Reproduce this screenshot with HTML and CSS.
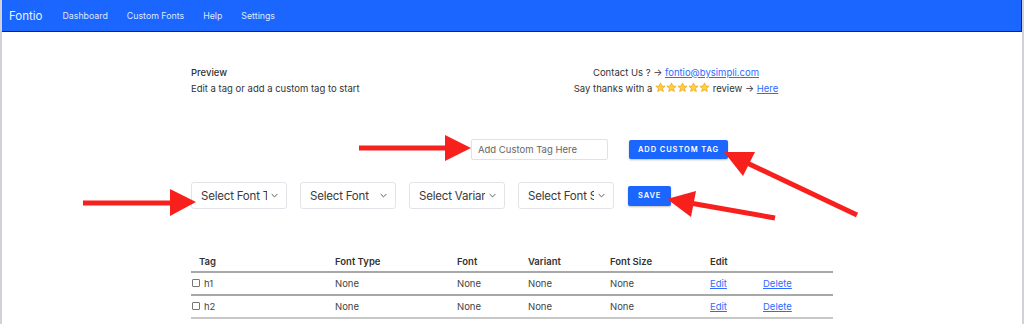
FILE: index.html
```html
<!DOCTYPE html>
<html>
<head>
  <title>Fontio</title>
  <link rel="stylesheet" href="styles.css">
</head>
<body>
  <div class="frame">
    <nav class="navbar">
      <span class="brand">Fontio</span>
      <a class="nav-link" href="#">Dashboard</a>
      <a class="nav-link" href="#">Custom Fonts</a>
      <a class="nav-link" href="#">Help</a>
      <a class="nav-link" href="#">Settings</a>
    </nav>

    <div class="content">
      <div class="top">
        <div class="preview">
          <div class="preview-title">Preview</div>
          <div>Edit a tag or add a custom tag to start</div>
        </div>
        <div class="contact">
          <div>Contact Us ? &#8594; <a href="#">fontio@bysimpli.com</a></div>
          <div>Say thanks with a
            <span class="stars">
              <svg viewBox="0 0 24 24"><path d="M12 2l2.9 6.6 7.1.6-5.4 4.7 1.6 7-6.2-3.7-6.2 3.7 1.6-7L2 9.2l7.1-.6z"/></svg><svg viewBox="0 0 24 24"><path d="M12 2l2.9 6.6 7.1.6-5.4 4.7 1.6 7-6.2-3.7-6.2 3.7 1.6-7L2 9.2l7.1-.6z"/></svg><svg viewBox="0 0 24 24"><path d="M12 2l2.9 6.6 7.1.6-5.4 4.7 1.6 7-6.2-3.7-6.2 3.7 1.6-7L2 9.2l7.1-.6z"/></svg><svg viewBox="0 0 24 24"><path d="M12 2l2.9 6.6 7.1.6-5.4 4.7 1.6 7-6.2-3.7-6.2 3.7 1.6-7L2 9.2l7.1-.6z"/></svg><svg viewBox="0 0 24 24"><path d="M12 2l2.9 6.6 7.1.6-5.4 4.7 1.6 7-6.2-3.7-6.2 3.7 1.6-7L2 9.2l7.1-.6z"/></svg>
            </span>
            review &#8594; <a href="#">Here</a></div>
        </div>
      </div>

      <div class="custom-row">
        <input class="tag-input" type="text" placeholder="Add Custom Tag Here">
        <button class="btn">ADD CUSTOM TAG</button>
      </div>

      <div class="select-row">
        <div class="select"><span class="select-text">Select Font Type</span><svg class="chev" viewBox="0 0 10 6"><path d="M1 1l4 4 4-4"/></svg></div>
        <div class="select"><span class="select-text">Select Font</span><svg class="chev" viewBox="0 0 10 6"><path d="M1 1l4 4 4-4"/></svg></div>
        <div class="select"><span class="select-text">Select Variant</span><svg class="chev" viewBox="0 0 10 6"><path d="M1 1l4 4 4-4"/></svg></div>
        <div class="select"><span class="select-text">Select Font Size</span><svg class="chev" viewBox="0 0 10 6"><path d="M1 1l4 4 4-4"/></svg></div>
        <button class="btn btn-save">SAVE</button>
      </div>

      <table class="tags">
        <colgroup>
          <col style="width:136px"><col style="width:122px"><col style="width:71px"><col style="width:82px"><col style="width:100px"><col style="width:53px"><col>
        </colgroup>
        <thead>
          <tr><th>Tag</th><th>Font Type</th><th>Font</th><th>Variant</th><th>Font Size</th><th>Edit</th><th></th></tr>
        </thead>
        <tbody>
          <tr>
            <td><span class="check"></span>h1</td><td>None</td><td>None</td><td>None</td><td>None</td>
            <td><a href="#">Edit</a></td><td><a href="#">Delete</a></td>
          </tr>
          <tr>
            <td><span class="check"></span>h2</td><td>None</td><td>None</td><td>None</td><td>None</td>
            <td><a href="#">Edit</a></td><td><a href="#">Delete</a></td>
          </tr>
        </tbody>
      </table>
    </div>

    <!-- annotation arrows drawn over the screenshot -->
    <svg class="arrows" viewBox="0 0 1024 324">
      <line x1="359" y1="148" x2="450" y2="148"/>
      <polygon points="471,148 445,135 445,161"/>
      <line x1="83" y1="203" x2="175" y2="203"/>
      <polygon points="196,202 170,189 170,216"/>
      <line x1="857" y1="215" x2="745" y2="162"/>
      <polygon points="724,152 743,176 755,152"/>
      <line x1="775" y1="218" x2="690" y2="203"/>
      <polygon points="667,199 691,217 696,191"/>
    </svg>
  </div>
</body>
</html>
```

FILE: styles.css
```css
body {
  margin: 0;
  font-family: Inter, "Liberation Sans", sans-serif;
  color: #333;
  background: #fff;
}

.frame {
  position: relative;
  width: 1020px;
  height: 324px;
  border-left: 2px solid #cfd3d8;
  border-right: 2px solid #cfd3d8;
  overflow: hidden;
}

.navbar {
  display: flex;
  align-items: center;
  height: 31px;
  margin-left: -2px;
  padding-left: 8px;
  background: #1a66ff;
  border: 1px solid #1f2633;
  border-top: 0;
}

.brand {
  color: #eef2ff;
  font-size: 11.5px;
  margin-right: 20px;
}

.nav-link {
  color: #dfe8ff;
  font-size: 8.8px;
  text-decoration: none;
  margin-right: 19px;
}

.content {
  width: 642px;
  margin: 0 auto;
  padding-top: 33px;
}

.top {
  display: flex;
  justify-content: space-between;
  font-size: 9.5px;
  line-height: 16px;
}

.preview-title {
  font-weight: 500;
}

.contact {
  width: 240px;
  margin-right: 37px;
  text-align: center;
}

.contact a,
.tags a {
  color: #2f6bff;
}

.stars svg {
  width: 11px;
  height: 11px;
  vertical-align: -1px;
  fill: #ffd23a;
  stroke: #f0a020;
  stroke-width: 1.6;
  stroke-linejoin: round;
}

.custom-row {
  display: flex;
  align-items: center;
  margin-top: 42px;
  padding-left: 280px;
}

.tag-input {
  box-sizing: border-box;
  width: 137px;
  height: 21px;
  padding: 0 6px;
  border: 1px solid #dfe2e6;
  border-radius: 2px;
  font-family: inherit;
  font-size: 9.5px;
  margin-right: 21px;
}

.tag-input::placeholder {
  color: #666;
}

.btn {
  height: 19px;
  padding: 0 9px;
  border: 0;
  border-radius: 2px;
  background: #1a66ff;
  color: #fff;
  font-family: inherit;
  font-size: 7.5px;
  font-weight: 600;
  letter-spacing: 0.9px;
  box-shadow: 0 1px 2px rgba(0, 0, 0, 0.25);
}

.select-row {
  display: flex;
  align-items: center;
  margin-top: 22px;
}

.select {
  box-sizing: border-box;
  display: flex;
  align-items: center;
  width: 96px;
  height: 27px;
  padding: 0 8px 0 9px;
  margin-right: 13px;
  border: 1px solid #e1e4e8;
  border-radius: 3px;
}

.select-text {
  flex: 1;
  overflow: hidden;
  white-space: nowrap;
  font-size: 11.5px;
  letter-spacing: -0.2px;
  color: #3a3a3a;
}

.chev {
  width: 7px;
  height: 5px;
  margin-left: 4px;
  fill: none;
  stroke: #555;
  stroke-width: 1.4;
}

.btn-save {
  height: 20px;
  padding: 0 10px;
  margin-left: 1px;
}

.tags {
  width: 642px;
  margin-top: 42px;
  border-collapse: collapse;
  table-layout: fixed;
  font-size: 9.5px;
}

.tags th {
  text-align: left;
  font-weight: 600;
  height: 20px;
  padding: 0 8px;
  border-bottom: 2px solid #a8a8a8;
}

.tags td {
  height: 21px;
  padding: 0 8px;
  color: #444;
  border-bottom: 2px solid #a8a8a8;
}

.tags tbody tr:last-child td {
  border-bottom-color: #c8c8c8;
}

.check {
  display: inline-block;
  width: 6px;
  height: 6px;
  border: 1px solid #777;
  border-radius: 1px;
  margin: 0 4px 0 -7px;
}

.arrows {
  position: absolute;
  top: 0;
  left: -2px;
  width: 1024px;
  height: 324px;
  pointer-events: none;
}

.arrows line {
  stroke: #f7201c;
  stroke-width: 5;
}

.arrows polygon {
  fill: #f7201c;
}
```
